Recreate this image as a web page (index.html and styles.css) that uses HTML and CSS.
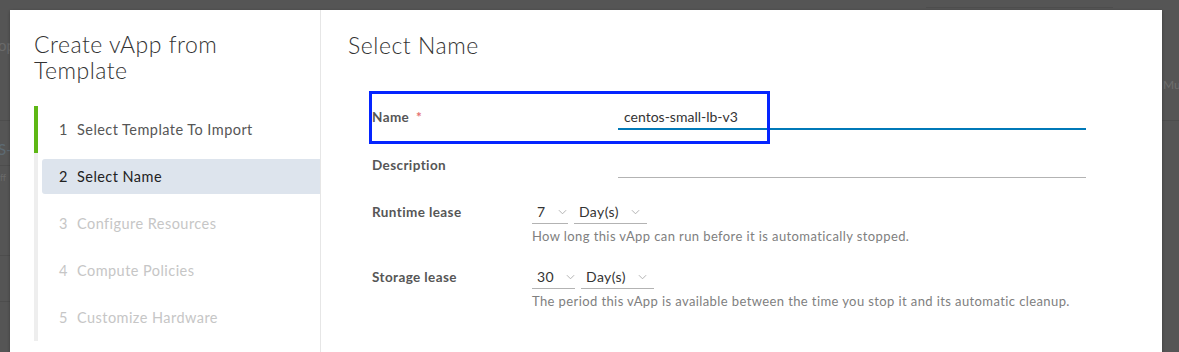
FILE: index.html
```html
<!DOCTYPE html>
<html lang="en">
<head>
    <meta charset="UTF-8">
    <title>Create vApp from Template</title>
    <link rel="stylesheet" href="styles.css">
</head>
<body>
    <div class="page-behind">
        <span class="ghost ghost-op">op</span>
        <span class="ghost ghost-s">S-</span>
        <span class="ghost ghost-ff">ff</span>
        <span class="ghost ghost-mu">Mu</span>
        <div class="ghost-line gl-1"></div>
        <div class="ghost-line gl-2"></div>
        <div class="ghost-line gl-3"></div>
        <div class="ghost-line gl-4"></div>
        <div class="ghost-line gl-5"></div>
        <div class="ghost-line gl-top"></div>
    </div>

    <div class="modal">
        <div class="wizard-nav">
            <h2 class="wizard-title">Create vApp from Template</h2>
            <ul class="steps">
                <li class="step done"><span class="step-btn"><span class="num">1</span>Select Template To Import</span></li>
                <li class="step current"><span class="step-btn"><span class="num">2</span>Select Name</span></li>
                <li class="step"><span class="step-btn"><span class="num">3</span>Configure Resources</span></li>
                <li class="step"><span class="step-btn"><span class="num">4</span>Compute Policies</span></li>
                <li class="step"><span class="step-btn"><span class="num">5</span>Customize Hardware</span></li>
            </ul>
        </div>

        <div class="wizard-content">
            <h3 class="page-title">Select Name</h3>
            <form class="form">
                <div class="row row-name">
                    <label class="label wide">Name <span class="req">*</span></label>
                    <div class="input active">centos-small-lb-v3</div>
                    <div class="highlight"></div>
                </div>
                <div class="row">
                    <label class="label wide">Description</label>
                    <div class="input"></div>
                </div>
                <div class="row lease">
                    <label class="label">Runtime lease</label>
                    <div class="lease-ctl">
                        <div class="selects">
                            <span class="select num-sel">7<svg class="caret" viewBox="0 0 10 6"><path d="M1 1l4 4 4-4"/></svg></span>
                            <span class="select unit-sel">Day(s)<svg class="caret" viewBox="0 0 10 6"><path d="M1 1l4 4 4-4"/></svg></span>
                        </div>
                        <p class="help">How long this vApp can run before it is automatically stopped.</p>
                    </div>
                </div>
                <div class="row lease">
                    <label class="label">Storage lease</label>
                    <div class="lease-ctl">
                        <div class="selects">
                            <span class="select num-sel">30<svg class="caret" viewBox="0 0 10 6"><path d="M1 1l4 4 4-4"/></svg></span>
                            <span class="select unit-sel">Day(s)<svg class="caret" viewBox="0 0 10 6"><path d="M1 1l4 4 4-4"/></svg></span>
                        </div>
                        <p class="help">The period this vApp is available between the time you stop it and its automatic cleanup.</p>
                    </div>
                </div>
            </form>
        </div>
    </div>
</body>
</html>
```

FILE: styles.css
```css
body {
    margin: 0;
    height: 352px;
    overflow: hidden;
    background-color: #555;
    font-family: Lato, "Open Sans", sans-serif;
    position: relative;
}

/* faded page under the backdrop */
.page-behind {
    position: absolute;
    inset: 0;
}

.ghost {
    position: absolute;
    color: #6a6a6a;
    font-size: 15px;
}

.ghost-op { left: -2px; top: 36px; }
.ghost-s { left: -2px; top: 140px; color: #5d6a72; }
.ghost-ff { left: 0; top: 172px; font-size: 9px; }
.ghost-mu { left: 1163px; top: 77px; font-size: 12px; color: #6e6e6e; }

.ghost-line {
    position: absolute;
    height: 1px;
    background-color: #4d4d4d;
}

.gl-1 { left: 0; width: 10px; top: 120px; }
.gl-2 { left: 0; width: 10px; top: 165px; }
.gl-3 { left: 0; width: 10px; top: 255px; }
.gl-4 { left: 0; width: 10px; top: 301px; }
.gl-5 { left: 1162px; width: 17px; top: 120px; }
.gl-top { left: 926px; width: 187px; top: 7px; }

.modal {
    position: relative;
    margin: 10px 0 0 10px;
    width: 1152px;
    height: 360px;
    background-color: #fff;
    display: flex;
    box-shadow: 0 1px 3px rgba(0, 0, 0, 0.3);
}

.wizard-nav {
    width: 311px;
    border-right: 1px solid #e6e6e6;
    padding: 21px 0 0 24px;
    box-sizing: border-box;
}

.wizard-title {
    margin: 0 0 23px 0;
    font-size: 23px;
    line-height: 26px;
    font-weight: 300;
    color: #333;
    width: 230px;
    letter-spacing: 0.5px;
}

.steps {
    list-style: none;
    margin: 0;
    padding: 0;
    border-left: 4px solid #eee;
}

.step {
    height: 47px;
    display: flex;
    align-items: center;
    padding-left: 4px;
    margin-left: -4px;
    border-left: 4px solid transparent;
}

.step.done {
    border-left-color: #5eb715;
}

.step-btn {
    display: flex;
    align-items: center;
    width: 100%;
    height: 35px;
    padding-left: 17px;
    font-size: 14.5px;
    letter-spacing: 0.45px;
    color: #c6c6c6;
    border-radius: 3px 0 0 3px;
}

.step-btn .num {
    width: 18px;
}

.step.done .step-btn {
    color: #565656;
}

.step.current .step-btn {
    background-color: #dde4ed;
    color: #222;
}

.wizard-content {
    flex: 1;
    padding: 22px 0 0 27px;
}

.page-title {
    margin: 0;
    font-size: 23px;
    line-height: 26px;
    font-weight: 300;
    color: #333;
    letter-spacing: 0.55px;
}

.form {
    margin-top: 47px;
    padding-left: 24px;
    width: 714px;
}

.row {
    display: flex;
    position: relative;
}

.label {
    width: 160px;
    flex-shrink: 0;
    font-size: 13.5px;
    letter-spacing: 0.4px;
    font-weight: 700;
    color: #565656;
    line-height: 24px;
}

.label.wide {
    width: 246px;
}

.req {
    color: #e57070;
    margin-left: 3px;
}

.input {
    flex: 1;
    height: 24px;
    line-height: 24px;
    border-bottom: 1px solid #b3b3b3;
    padding-left: 6px;
    font-size: 14px;
    color: #333;
}

.input.active {
    border-bottom: 2px solid #0079b8;
    height: 23px;
}

.row + .row {
    margin-top: 23px;
}

.row.lease {
    margin-top: 22px;
}

.row.lease + .row.lease {
    margin-top: 21px;
}

/* annotation rectangle drawn over the name field */
.highlight {
    position: absolute;
    left: -3px;
    top: -14px;
    width: 395px;
    height: 47px;
    border: 3px solid #0525ff;
}

.selects {
    display: flex;
    gap: 6px;
}

.select {
    display: flex;
    align-items: center;
    height: 24px;
    border-bottom: 1px solid #b3b3b3;
    font-size: 14px;
    letter-spacing: 0.4px;
    color: #333;
    padding-left: 5px;
    box-sizing: border-box;
}

.num-sel {
    min-width: 36px;
}

.unit-sel {
    width: 73px;
}

.caret {
    width: 9px;
    height: 6px;
    margin-left: 12px;
    fill: none;
    stroke: #aaa;
    stroke-width: 1;
}

.help {
    margin: 4px 0 0 0;
    font-size: 13px;
    letter-spacing: 0.4px;
    color: #808080;
}
```
